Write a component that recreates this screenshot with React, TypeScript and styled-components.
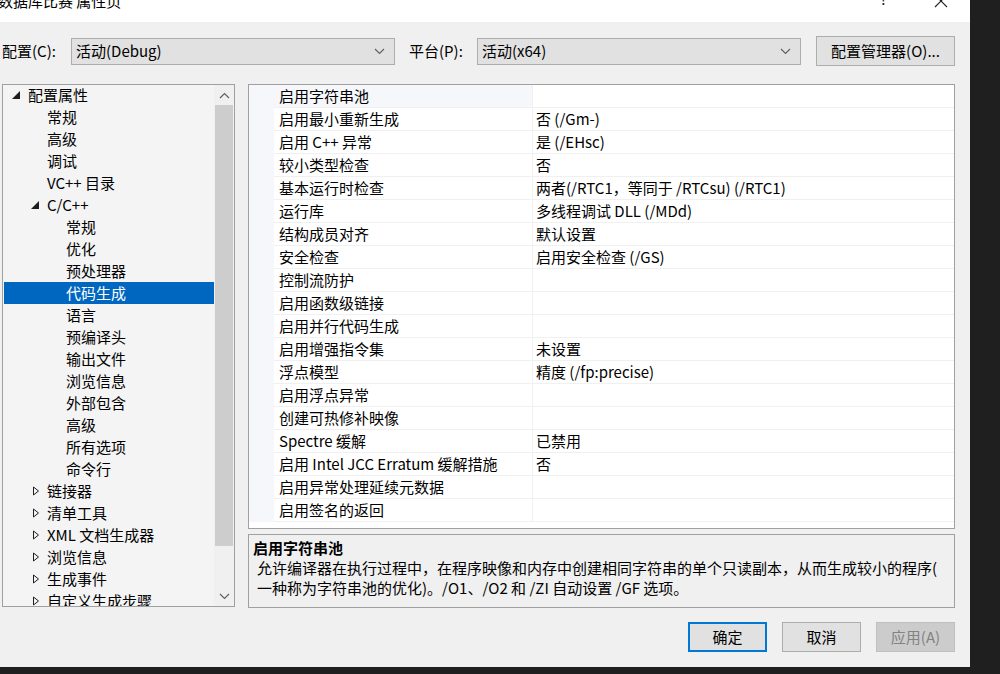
import styled, { createGlobalStyle } from "styled-components";

const GlobalStyle = createGlobalStyle`
  html, body {
    margin: 0;
    padding: 0;
    background: #1f1f1f;
  }
  body {
    font-family: "Noto Sans CJK SC", "Noto Sans", sans-serif;
    font-size: 15px;
    color: #000;
  }
  * { box-sizing: border-box; }
`;

const Dialog = styled.div`
  width: 970px;
  height: 667px;
  background: #f0f0f0;
  display: flex;
  flex-direction: column;
  overflow: hidden;
`;

const TitleBar = styled.div`
  height: 22px;
  background: #fff;
  display: flex;
  align-items: flex-start;
  overflow: hidden;
`;

const Title = styled.div`
  flex: 1;
  margin: -10px 0 0 -2px;
  line-height: 22px;
  white-space: nowrap;
`;

const TitleButton = styled.div`
  width: 57px;
  height: 22px;
  display: flex;
  justify-content: center;
  align-items: flex-start;
  line-height: 22px;
  color: #222;
`;

const Help = styled.span`
  margin-top: -12px;
  font-size: 15px;
`;

const ConfigBar = styled.div`
  display: flex;
  align-items: center;
  height: 30px;
  margin-top: 14px;
  padding-left: 2px;
`;

const Label = styled.div<{ $w: number }>`
  width: ${(p) => p.$w}px;
  line-height: 20px;
  white-space: nowrap;
`;

const Select = styled.div`
  width: 324px;
  height: 27px;
  background: #e1e1e1;
  border: 1px solid #adadad;
  display: flex;
  align-items: center;
  justify-content: space-between;
  padding: 0 9px 0 4px;
  line-height: 20px;
  margin-right: 14px;
`;

const Button = styled.div<{ $primary?: boolean; $disabled?: boolean }>`
  height: 30px;
  width: 79px;
  display: flex;
  align-items: center;
  justify-content: center;
  line-height: 20px;
  background: ${(p) => (p.$disabled ? "#cccccc" : "#e1e1e1")};
  color: ${(p) => (p.$disabled ? "#838383" : "#000")};
  border: ${(p) =>
    p.$primary ? "2px solid #0078d4" : p.$disabled ? "1px solid #bfbfbf" : "1px solid #adadad"};
`;

const ManagerButton = styled(Button)`
  width: 139px;
  margin-left: 1px;
`;

const Main = styled.div`
  display: flex;
  gap: 13px;
  margin-top: 18px;
  padding-left: 2px;
  height: 524px;
`;

const TreePanel = styled.div`
  width: 233px;
  height: 523px;
  border: 1px solid #a0a0a0;
  background: #f4f4f4;
  display: flex;
  overflow: hidden;
`;

const TreeList = styled.div`
  flex: 1;
  margin-top: -1px;
  padding-left: 1px;
  overflow: hidden;
`;

const TreeRow = styled.div<{ $level: number; $selected?: boolean }>`
  height: 22px;
  display: flex;
  align-items: center;
  padding-left: ${(p) => 8 + p.$level * 19}px;
  background: ${(p) => (p.$selected ? "#0067c0" : "transparent")};
  color: ${(p) => (p.$selected ? "#fff" : "#000")};
  white-space: nowrap;
  line-height: 20px;
`;

const Expander = styled.span`
  width: 16px;
  height: 22px;
  display: flex;
  align-items: center;
  flex-shrink: 0;
`;

const Scrollbar = styled.div`
  width: 20px;
  background: #f0f0f0;
  display: flex;
  flex-direction: column;
`;

const ScrollArrow = styled.div`
  height: 20px;
  display: flex;
  align-items: center;
  justify-content: center;
`;

const Thumb = styled.div`
  margin: 0 1px;
  background: #cdcdcd;
`;

const Spacer = styled.div`
  flex: 1;
`;

const RightColumn = styled.div`
  width: 707px;
  display: flex;
  flex-direction: column;
  gap: 5px;
`;

const Grid = styled.div`
  height: 446px;
  border: 1px solid #a0a0a0;
  background: #fff;
  overflow: hidden;
`;

const GridRow = styled.div`
  display: grid;
  grid-template-columns: 25px 258px 1fr;
  height: 23px;
`;

const Gutter = styled.div`
  background: #f5f7fa;
`;

const NameCell = styled.div<{ $selected?: boolean }>`
  background: ${(p) => (p.$selected ? "#f5f7fa" : "#fff")};
  border-bottom: 1px solid #f0f0f0;
  padding-left: 5px;
  line-height: 22px;
  white-space: nowrap;
  overflow: hidden;
`;

const ValueCell = styled.div`
  border-left: 1px solid #f0f0f0;
  border-bottom: 1px solid #f0f0f0;
  padding-left: 3px;
  line-height: 22px;
  white-space: nowrap;
  overflow: hidden;
`;

const Description = styled.div`
  height: 74px;
  border: 1px solid #a0a0a0;
  background: #f0f0f0;
  padding: 3px 8px 0 4px;
`;

const DescTitle = styled.div`
  font-weight: bold;
  line-height: 20px;
`;

const DescLine = styled.div`
  line-height: 20px;
  padding-left: 4px;
  white-space: nowrap;
`;

const ButtonRow = styled.div`
  display: flex;
  justify-content: flex-end;
  gap: 15px;
  margin-top: 14px;
  padding-right: 15px;
`;

const Chevron = ({ up, color = "#606060" }: { up?: boolean; color?: string }) => (
  <svg width="11" height="7" viewBox="0 0 11 7">
    <path
      d={up ? "M1 6 L5.5 1.5 L10 6" : "M1 1 L5.5 5.5 L10 1"}
      fill="none"
      stroke={color}
      strokeWidth="1.2"
    />
  </svg>
);

const Expanded = ({ color }: { color: string }) => (
  <svg width="8" height="8" viewBox="0 0 8 8">
    <polygon points="8,0 8,8 0,8" fill={color} />
  </svg>
);

const Collapsed = () => (
  <svg width="9" height="10" viewBox="0 0 9 10" style={{ marginLeft: 1 }}>
    <polygon points="1.5,1 6.5,5 1.5,9" fill="none" stroke="#1e1e1e" strokeWidth="1" />
  </svg>
);

type TreeItem = { label: string; level: number; state?: "open" | "closed"; selected?: boolean };

const tree: TreeItem[] = [
  { label: "配置属性", level: 0, state: "open" },
  { label: "常规", level: 1 },
  { label: "高级", level: 1 },
  { label: "调试", level: 1 },
  { label: "VC++ 目录", level: 1 },
  { label: "C/C++", level: 1, state: "open" },
  { label: "常规", level: 2 },
  { label: "优化", level: 2 },
  { label: "预处理器", level: 2 },
  { label: "代码生成", level: 2, selected: true },
  { label: "语言", level: 2 },
  { label: "预编译头", level: 2 },
  { label: "输出文件", level: 2 },
  { label: "浏览信息", level: 2 },
  { label: "外部包含", level: 2 },
  { label: "高级", level: 2 },
  { label: "所有选项", level: 2 },
  { label: "命令行", level: 2 },
  { label: "链接器", level: 1, state: "closed" },
  { label: "清单工具", level: 1, state: "closed" },
  { label: "XML 文档生成器", level: 1, state: "closed" },
  { label: "浏览信息", level: 1, state: "closed" },
  { label: "生成事件", level: 1, state: "closed" },
  { label: "自定义生成步骤", level: 1, state: "closed" },
];

const props: [string, string][] = [
  ["启用字符串池", ""],
  ["启用最小重新生成", "否 (/Gm-)"],
  ["启用 C++ 异常", "是 (/EHsc)"],
  ["较小类型检查", "否"],
  ["基本运行时检查", "两者(/RTC1，等同于 /RTCsu) (/RTC1)"],
  ["运行库", "多线程调试 DLL (/MDd)"],
  ["结构成员对齐", "默认设置"],
  ["安全检查", "启用安全检查 (/GS)"],
  ["控制流防护", ""],
  ["启用函数级链接", ""],
  ["启用并行代码生成", ""],
  ["启用增强指令集", "未设置"],
  ["浮点模型", "精度 (/fp:precise)"],
  ["启用浮点异常", ""],
  ["创建可热修补映像", ""],
  ["Spectre 缓解", "已禁用"],
  ["启用 Intel JCC Erratum 缓解措施", "否"],
  ["启用异常处理延续元数据", ""],
  ["启用签名的返回", ""],
];

export default function App() {
  return (
    <>
      <GlobalStyle />
      <Dialog>
        <TitleBar>
          <Title>数据库比赛 属性页</Title>
          <TitleButton>
            <Help>?</Help>
          </TitleButton>
          <TitleButton>
            <svg width="14" height="14" viewBox="0 0 14 14" style={{ marginTop: -6 }}>
              <path d="M1 1 L13 13 M13 1 L1 13" stroke="#222" strokeWidth="1.1" />
            </svg>
          </TitleButton>
          <div style={{ width: 1 }} />
        </TitleBar>

        <ConfigBar>
          <Label $w={69}>配置(C):</Label>
          <Select>
            <span>活动(Debug)</span>
            <Chevron />
          </Select>
          <Label $w={68}>平台(P):</Label>
          <Select>
            <span>活动(x64)</span>
            <Chevron />
          </Select>
          <ManagerButton>配置管理器(O)...</ManagerButton>
        </ConfigBar>

        <Main>
          <TreePanel>
            <TreeList>
              {tree.map((t, i) => (
                <TreeRow key={i} $level={t.level} $selected={t.selected}>
                  <Expander>
                    {t.state === "open" && <Expanded color="#1e1e1e" />}
                    {t.state === "closed" && <Collapsed />}
                  </Expander>
                  {t.label}
                </TreeRow>
              ))}
            </TreeList>
            <Scrollbar>
              <ScrollArrow>
                <Chevron up />
              </ScrollArrow>
              <Thumb style={{ height: 441 }} />
              <Spacer />
              <ScrollArrow>
                <Chevron />
              </ScrollArrow>
            </Scrollbar>
          </TreePanel>

          <RightColumn>
            <Grid>
              {props.map(([name, value], i) => (
                <GridRow key={i}>
                  <Gutter />
                  <NameCell $selected={i === 0}>{name}</NameCell>
                  <ValueCell>{value}</ValueCell>
                </GridRow>
              ))}
            </Grid>
            <Description>
              <DescTitle>启用字符串池</DescTitle>
              <DescLine>
                允许编译器在执行过程中，在程序映像和内存中创建相同字符串的单个只读副本，从而生成较小的程序(
              </DescLine>
              <DescLine>一种称为字符串池的优化)。/O1、/O2 和 /ZI 自动设置 /GF 选项。</DescLine>
            </Description>
          </RightColumn>
        </Main>

        <ButtonRow>
          <Button $primary>确定</Button>
          <Button>取消</Button>
          <Button $disabled>应用(A)</Button>
        </ButtonRow>
      </Dialog>
    </>
  );
}
